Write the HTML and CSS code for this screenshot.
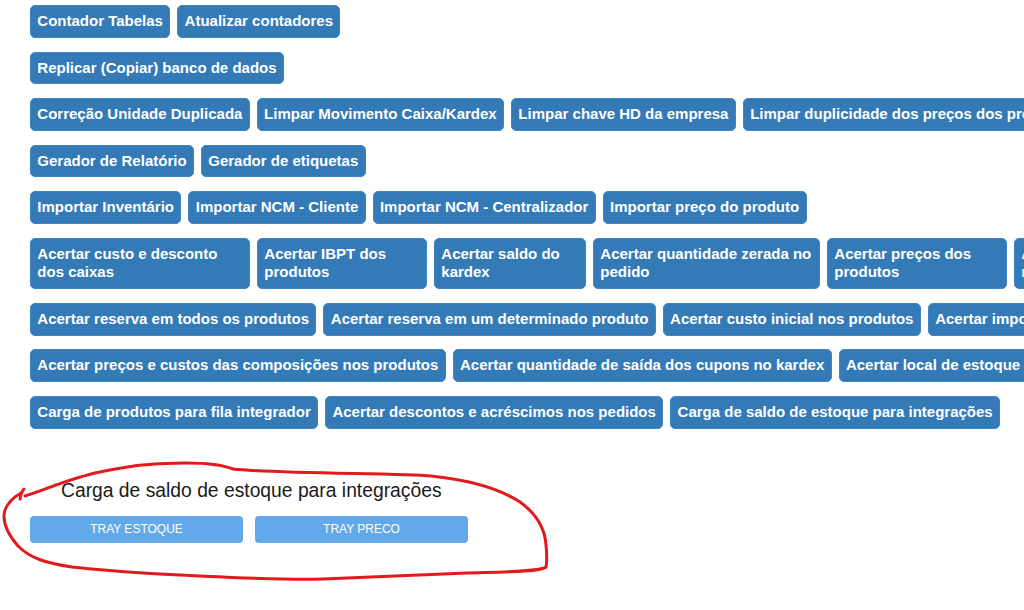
FILE: index.html
```html
<!DOCTYPE html>
<html lang="pt-BR">
<head>
<meta charset="utf-8">
<title>Ferramentas</title>
<link rel="stylesheet" href="styles.css">
</head>
<body>
<div class="page">
  <div class="tools">
    <div class="row">
      <button class="btn">Contador Tabelas</button>
      <button class="btn">Atualizar contadores</button>
    </div>
    <div class="row">
      <button class="btn">Replicar (Copiar) banco de dados</button>
    </div>
    <div class="row">
      <button class="btn">Correção Unidade Duplicada</button>
      <button class="btn">Limpar Movimento Caixa/Kardex</button>
      <button class="btn">Limpar chave HD da empresa</button>
      <button class="btn">Limpar duplicidade dos preços dos produtos</button>
    </div>
    <div class="row">
      <button class="btn">Gerador de Relatório</button>
      <button class="btn">Gerador de etiquetas</button>
    </div>
    <div class="row">
      <button class="btn">Importar Inventário</button>
      <button class="btn">Importar NCM - Cliente</button>
      <button class="btn">Importar NCM - Centralizador</button>
      <button class="btn">Importar preço do produto</button>
    </div>
    <div class="row">
      <button class="btn wrap w220">Acertar custo e desconto dos caixas</button>
      <button class="btn wrap w170">Acertar IBPT dos produtos</button>
      <button class="btn wrap w152">Acertar saldo do kardex</button>
      <button class="btn wrap w226">Acertar quantidade zerada no pedido</button>
      <button class="btn wrap w180">Acertar preços dos produtos</button>
      <button class="btn wrap w160">Acertar estoque negativo</button>
    </div>
    <div class="row">
      <button class="btn">Acertar reserva em todos os produtos</button>
      <button class="btn">Acertar reserva em um determinado produto</button>
      <button class="btn">Acertar custo inicial nos produtos</button>
      <button class="btn">Acertar impostos dos produtos</button>
    </div>
    <div class="row">
      <button class="btn">Acertar preços e custos das composições nos produtos</button>
      <button class="btn">Acertar quantidade de saída dos cupons no kardex</button>
      <button class="btn">Acertar local de estoque dos produtos</button>
    </div>
    <div class="row">
      <button class="btn">Carga de produtos para fila integrador</button>
      <button class="btn">Acertar descontos e acréscimos nos pedidos</button>
      <button class="btn">Carga de saldo de estoque para integrações</button>
    </div>
  </div>

  <section class="integration">
    <h4 class="integration-title">Carga de saldo de estoque para integrações</h4>
    <div class="integration-actions">
      <button class="btn-light">TRAY ESTOQUE</button>
      <button class="btn-light">TRAY PRECO</button>
    </div>
  </section>
</div>

<svg class="annotation" width="1024" height="610" viewBox="0 0 1024 610" aria-hidden="true">
  <path d="M25,496 C45,490 70,478 100,472 C120,468 130,466 143,465 C180,462 215,462 233,469 C280,474 400,473 431,476 C470,480 500,489 520,502 C538,515 545,530 546,545 C547,555 547,562 546,567 C540,572 500,572 467,573 C420,575 370,577 323,579 C280,580 230,578 143,573 C110,571 90,569 72,567 C45,563 30,558 18,546 C6,532 2,520 5,510 C8,502 14,497 21,493"/>
  <path d="M20,499 C21,494 22,491 24,489"/>
</svg>
</body>
</html>
```

FILE: styles.css
```css
html, body {
  margin: 0;
  padding: 0;
  overflow: hidden;
  background: #ffffff;
}

body {
  font-family: "Liberation Sans", Arial, sans-serif;
  color: #1a1a1a;
  width: 1024px;
  height: 610px;
  position: relative;
}

.page {
  padding: 5px 0 0 30px;
}

.tools {
  display: flex;
  flex-direction: column;
  gap: 13.75px;
}

.row {
  display: flex;
  flex-wrap: nowrap;
  gap: 7px;
  align-items: flex-start;
}

.btn {
  flex: 0 0 auto;
  font-family: "Liberation Sans", Arial, sans-serif;
  font-weight: bold;
  font-size: 15px;
  line-height: 18.75px;
  color: #ffffff;
  background: #337ab7;
  border: 1px solid #3d85c4;
  border-radius: 5px;
  padding: 6px 6.35px;
  white-space: nowrap;
  text-align: left;
  cursor: pointer;
}

.btn.wrap {
  white-space: normal;
}

.w220 { width: 220px; }
.w170 { width: 170px; }
.w152 { width: 152px; }
.w226 { width: 227px; }
.w180 { width: 180px; }
.w160 { width: 160px; }

.integration {
  margin-top: 51px;
}

.integration-title {
  margin: 0 0 14px 31px;
  font-size: 19.3px;
  font-weight: normal;
  line-height: 22px;
  color: #1a1a1a;
}

.integration-actions {
  display: flex;
  gap: 12px;
}

.btn-light {
  width: 213px;
  height: 27px;
  font-family: "Liberation Sans", Arial, sans-serif;
  font-size: 12px;
  color: #ffffff;
  background: #63a9ea;
  border: none;
  border-radius: 4px;
  padding: 0;
  text-align: center;
  cursor: pointer;
}

.annotation {
  position: absolute;
  left: 0;
  top: 0;
  pointer-events: none;
}

.annotation path {
  fill: none;
  stroke: #e3191b;
  stroke-width: 3;
  stroke-linecap: round;
  stroke-linejoin: round;
}
```
